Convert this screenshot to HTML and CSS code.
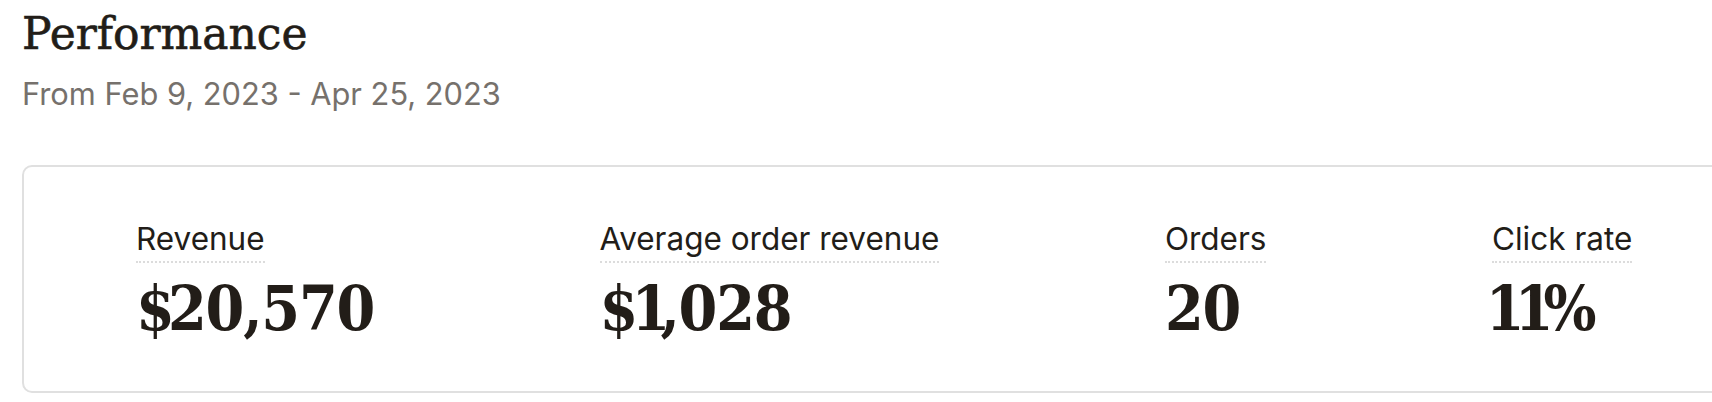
FILE: index.html
```html
<!DOCTYPE html>
<html>
<head>
<meta charset="utf-8">
<link rel="stylesheet" href="styles.css">
</head>
<body>
<div class="page">
  <header class="head">
    <h1 class="title">Performance</h1>
    <p class="subtitle">From Feb 9, 2023 - Apr 25, 2023</p>
  </header>
  <section class="card">
    <div class="metric">
      <span class="label">Revenue</span>
      <span class="value"><span class="cur">$</span>20,570</span>
    </div>
    <div class="metric">
      <span class="label">Average order revenue</span>
      <span class="value"><span class="cur">$</span><span class="one">1</span>,028</span>
    </div>
    <div class="metric">
      <span class="label">Orders</span>
      <span class="value">20</span>
    </div>
    <div class="metric">
      <span class="label">Click rate</span>
      <span class="value"><span class="one first">1</span><span class="one">1</span>%</span>
    </div>
  </section>
</div>
</body>
</html>
```
FILE: styles.css
```css
html, body {
  margin: 0;
  padding: 0;
  background: #ffffff;
  overflow: hidden;
}
.page {
  padding: 8px 0 0 22px;
  width: 1800px;
}
.head {
  display: flex;
  flex-direction: column;
}
.title {
  margin: 0;
  font-family: "DejaVu Serif", serif;
  font-weight: 400;
  font-size: 44px;
  line-height: 52px;
  color: #221d18;
  -webkit-text-stroke: 0.6px #221d18;
}
.subtitle {
  margin: 16px 0 0 0;
  font-family: "Inter", sans-serif;
  font-size: 30.8px;
  line-height: 36px;
  color: #76716c;
}
.card {
  margin-top: 53px;
  width: 1760px;
  height: 228px;
  box-sizing: border-box;
  border: 2px solid #e0e0e0;
  border-radius: 10px;
  display: flex;
  align-items: flex-start;
  gap: 225.5px;
  padding: 53px 0 0 112px;
}
.metric {
  display: flex;
  flex-direction: column;
  align-items: flex-start;
}
.label {
  font-family: "Inter", sans-serif;
  font-size: 31.5px;
  line-height: 38px;
  color: #221d18;
  border-bottom: 2px dotted #dcdcdc;
  padding-bottom: 3px;
}
.value {
  margin-top: 11px;
  font-family: "DejaVu Serif Condensed", "DejaVu Serif", serif;
  font-stretch: condensed;
  font-weight: 700;
  font-size: 62px;
  line-height: 70px;
  letter-spacing: -0.02em;
  color: #221d18;
}
.cur {
  letter-spacing: -0.11em;
}
.one {
  letter-spacing: -0.16em;
}
.first {
  margin-left: -0.1em;
}
```
